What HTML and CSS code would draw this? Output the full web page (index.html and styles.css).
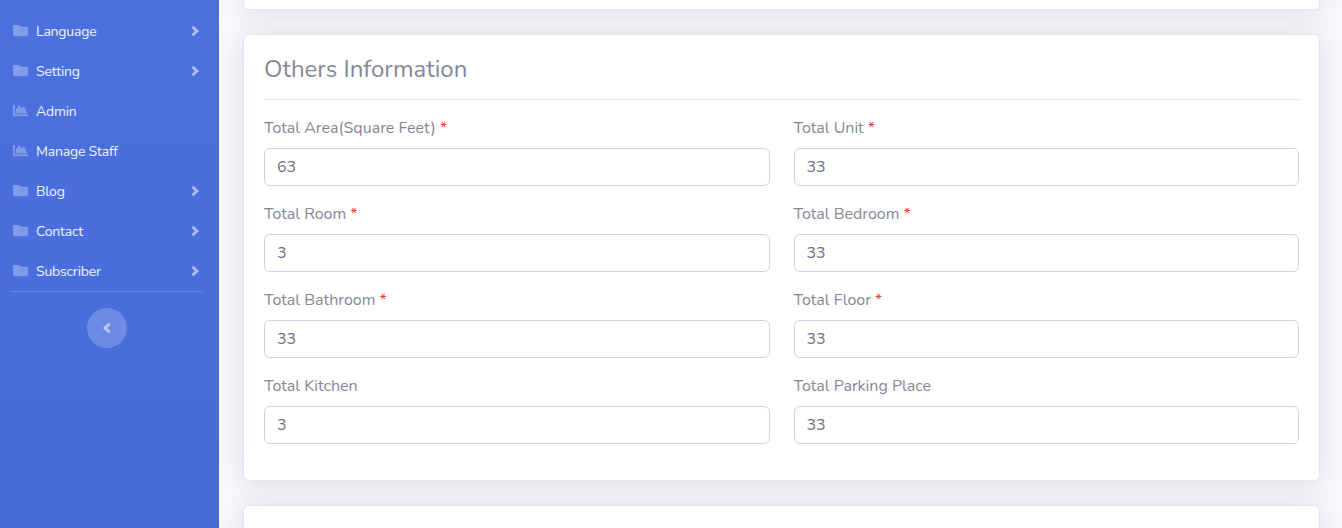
FILE: index.html
```html
<!DOCTYPE html>
<html lang="en">
<head>
<meta charset="utf-8">
<title>Others Information</title>
<link rel="stylesheet" href="styles.css">
</head>
<body>
<svg width="0" height="0" class="defs">
<symbol id="folder" viewBox="0 0 512 512"><path d="M464 128H272l-64-64H48C21.500 64 0 85.500 0 112v288c0 26.500 21.500 48 48 48h416c26.500 0 48-21.500 48-48V176c0-26.500-21.500-48-48-48z"/></symbol>
<symbol id="chart" viewBox="0 0 512 512"><path d="M500 384c6.600 0 12 5.400 12 12v40c0 6.600-5.400 12-12 12H12c-6.600 0-12-5.400-12-12V76c0-6.600 5.400-12 12-12h40c6.600 0 12 5.400 12 12v308h436zM365 125L300 170l-85-88c-5-6-15-6-20 1L92 240v122h396l-103-233c-4-7-13-9-20-4z"/></symbol>
<symbol id="right" viewBox="0 0 9 12"><path d="M1.500 1.800 5.900 6l-4.400 4.200" fill="none" stroke="currentColor" stroke-width="2.900"/></symbol>
</svg>
<div class="page">
<nav class="sidebar">
<a class="item"><svg class="icon"><use href="#folder"/></svg><span>Language</span><svg class="arrow"><use href="#right"/></svg></a>
<a class="item"><svg class="icon"><use href="#folder"/></svg><span>Setting</span><svg class="arrow"><use href="#right"/></svg></a>
<a class="item"><svg class="icon"><use href="#chart"/></svg><span>Admin</span></a>
<a class="item"><svg class="icon"><use href="#chart"/></svg><span>Manage Staff</span></a>
<a class="item"><svg class="icon"><use href="#folder"/></svg><span>Blog</span><svg class="arrow"><use href="#right"/></svg></a>
<a class="item"><svg class="icon"><use href="#folder"/></svg><span>Contact</span><svg class="arrow"><use href="#right"/></svg></a>
<a class="item"><svg class="icon"><use href="#folder"/></svg><span>Subscriber</span><svg class="arrow"><use href="#right"/></svg></a>
<hr>
<button class="toggle" aria-label="Collapse"><svg><use href="#right"/></svg></button>
</nav>
<main class="content">
<section class="card previous"></section>
<section class="card form">
<h2><span>Others Information</span></h2>
<div class="grid">
<label><span class="label">Total Area(Square Feet) <b>*</b></span><input value="63"></label>
<label><span class="label">Total Unit <b>*</b></span><input value="33"></label>
<label><span class="label">Total Room <b>*</b></span><input value="3"></label>
<label><span class="label">Total Bedroom <b>*</b></span><input value="33"></label>
<label><span class="label">Total Bathroom <b>*</b></span><input value="33"></label>
<label><span class="label">Total Floor <b>*</b></span><input value="33"></label>
<label><span class="label">Total Kitchen</span><input value="3"></label>
<label><span class="label">Total Parking Place</span><input value="33"></label>
</div>
</section>
<section class="card next"></section>
</main>
</div>
</body>
</html>
```
FILE: styles.css
```css
* { box-sizing: border-box; }
body { margin: 0; font-family: Nunito, "Open Sans", sans-serif; color: #858796; background: #f8f9fc; }
.defs { position: absolute; }
.page { display: flex; height: 528px; overflow: hidden; }
.sidebar { width: 219px; flex: none; padding-top: 11px; background: linear-gradient(#4c71df, #476cda); }
.item { display: flex; align-items: center; height: 40px; padding: 0 19px 0 12.600px; color: #f0f3fd; font-size: 14px; letter-spacing: -.2px; }
.icon { width: 15px; height: 15px; margin: 0 8.400px 1px 0; fill: rgba(255,255,255,.3); }
.arrow { width: 9px; height: 12px; margin-left: auto; color: rgba(255,255,255,.55); }
.sidebar hr { width: 192px; height: 1px; margin: 0 0 16px 11px; border: 0; background: rgba(255,255,255,.18); }
.toggle { display: flex; align-items: center; justify-content: center; width: 40px; height: 40px; margin-left: 87px; padding: 0 2px 0 0; border: 0; border-radius: 50%; background: rgba(255,255,255,.2); color: rgba(255,255,255,.55); }
.toggle svg { width: 9px; height: 12px; transform: scaleX(-1); }
.content { flex: 1; padding: 0 22px 0 24px; }
.card { background: #fff; border: 1px solid #e3e6f0; border-radius: 5.600px; box-shadow: 0 2px 28px rgba(58,59,69,.15); }
.previous { height: 30px; margin-top: -20px; margin-bottom: 24px; }
.form { height: 447px; padding: 20px; }
h2 { height: 45px; margin: 0 0 16px; border-bottom: 1px solid #e1e2e8; font-size: 24px; font-weight: 400; line-height: 29px; }
.grid { display: grid; grid-template-columns: 1fr 1fr; column-gap: 24px; row-gap: 16px; }
label { display: block; height: 70px; font-size: 16px; }
.label { display: block; height: 32px; line-height: 24px; }
b { color: #f23b3b; font-weight: 400; }
input { display: block; width: 100%; height: 38px; padding: 6px 12px; border: 1px solid #d1d3e2; border-radius: 5.600px; color: #6e707e; background: #fff; font: inherit; }
.next { height: 60px; margin-top: 24px; }
```
